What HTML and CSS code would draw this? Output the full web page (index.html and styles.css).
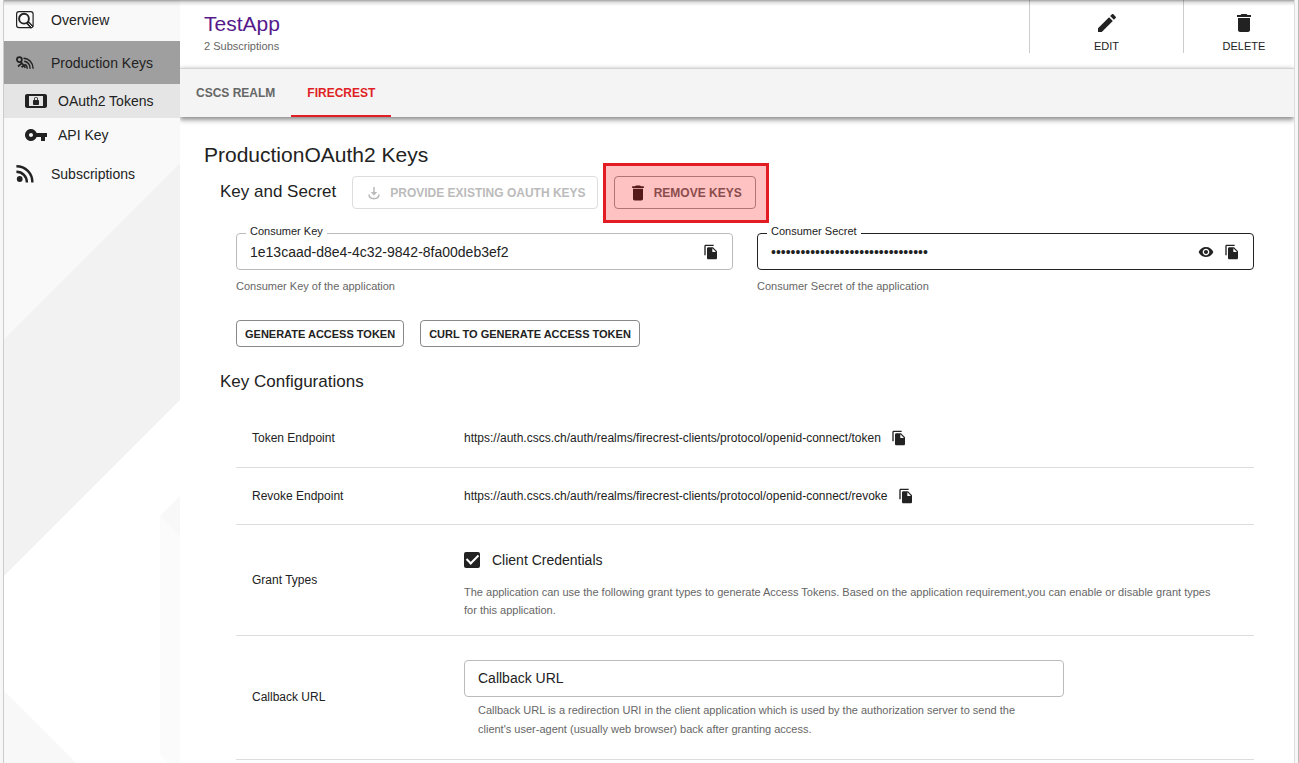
FILE: index.html
```html
<!DOCTYPE html>
<html lang="en">
<head>
<meta charset="utf-8">
<meta name="viewport" content="width=device-width, initial-scale=1">
<title>TestApp - Production OAuth2 Keys</title>
<link rel="stylesheet" href="styles.css">
</head>
<body>
<svg class="defs" aria-hidden="true">
  <symbol id="copy" viewBox="0 0 24 24"><path d="M16 1H4c-1.100 0-2 .9-2 2v14h2V3h12V1zm-1 4l6 6v10c0 1.100-.9 2-2 2H7.990C6.890 23 6 22.100 6 21V7c0-1.100.89-2 1.990-2h7zm-1 7h5.500L14 6.500V12z"/></symbol>
  <symbol id="trash" viewBox="0 0 24 24"><path d="M6 19c0 1.100.9 2 2 2h8c1.100 0 2-.9 2-2V7H6v12zM19 4h-3.500l-1-1h-5l-1 1H5v2h14V4z"/></symbol>
</svg>
<div class="page">
  <nav class="sidebar" aria-label="Application">
    <svg class="backdrop" viewBox="0 0 176 763" preserveAspectRatio="none" aria-hidden="true">
      <path fill="#fff" d="M0 0H176V763H0z"/>
      <path fill="#f9f9f9" d="M0 0H176V163L0 339z"/>
      <path fill="#f2f2f2" d="M176 163V400L0 576V339z"/>
      <path fill="#f8f8f8" d="M176 496V537L156 516z"/>
      <path fill="#fbfbfb" d="M156 516L176 537V763H164L156 755z"/>
      <path fill="#f8f8f8" d="M0 691L72 763H0z"/>
    </svg>
    <a class="item" href="#overview">
      <svg class="icon-sm" viewBox="0 0 18 18" fill="none" stroke="#222"><rect x=".6" y=".6" width="16.500" height="16" rx="2.400" stroke-width="1.200"/><circle cx="8" cy="7.700" r="4.900" stroke-width="1.900"/><path d="M11.300 11.200l5 5.300" stroke-width="3.600"/><path d="M12.500 12.300l3.500 3.800" stroke="#fff" stroke-width="1"/></svg>
      Overview</a>
    <a class="item active" href="#production">
      <svg class="icon-sm" viewBox="0 0 18 18" fill="none" stroke="#222" stroke-width="1.700"><circle cx="3.400" cy="5.600" r="2.500"/><path d="M4.800 7.800l4.600 6M2 12.500l3.600-3.200M5.500 13.300l3.500-2.500"/><path d="M7.500 4.200c5.500.2 9.500 4.500 9.700 10.600M8.200 7.300c3.500.5 5.800 3.400 6 7.500M9 10.300c1.400.7 2.200 2.200 2.300 4.500" stroke-width="1.400"/></svg>
      Production Keys</a>
    <a class="item sub selected" href="#tokens">
      <svg class="icon-md" viewBox="0 0 24 24"><path d="M21 5H3c-1.100 0-2 .9-2 2v10c0 1.100.9 2 2 2h18c1.100 0 2-.9 2-2V7c0-1.100-.9-2-2-2zm-2 12H5V7h14v10zm-9-1h4c.55 0 1-.45 1-1v-3c0-.55-.45-1-1-1v-1c0-1.110-.9-2-2-2-1.110 0-2 .9-2 2v1c-.55 0-1 .45-1 1v3c0 .55.45 1 1 1zm.8-6c0-.66.54-1.200 1.200-1.200.66 0 1.200.54 1.200 1.200v1h-2.400v-1z"/></svg>
      OAuth2 Tokens</a>
    <a class="item sub" href="#apikey">
      <svg class="icon-md" viewBox="0 0 24 24"><path d="M12.650 10C11.830 7.670 9.610 6 7 6c-3.310 0-6 2.690-6 6s2.690 6 6 6c2.610 0 4.830-1.670 5.650-4H17v4h4v-4h2v-4H12.650zM7 14c-1.100 0-2-.9-2-2s.9-2 2-2 2 .9 2 2-.9 2-2 2z"/></svg>
      API Key</a>
    <a class="item" href="#subscriptions">
      <svg class="icon-sm" viewBox="0 0 18 18" fill="none" stroke="#222" stroke-width="2.400"><circle cx="3.700" cy="14" r="2.900" fill="#222" stroke="none"/><path d="M.4 1.300C9.500 1.300 16.400 8.200 16.400 17.500M.4 6.800C6.500 6.800 10.900 11.200 10.900 17.500"/></svg>
      Subscriptions</a>
  </nav>
  <main class="main">
    <header class="top">
      <div class="title">
        <a class="app" href="#app">TestApp</a>
        <span class="small">2 Subscriptions</span>
      </div>
      <button class="action edit" type="button"><svg class="icon-md" viewBox="0 0 24 24"><path d="M3 17.250V21h3.750L17.810 9.940l-3.750-3.750L3 17.250zM20.710 7.040c.39-.39.39-1.020 0-1.410l-2.340-2.340c-.39-.39-1.020-.39-1.410 0l-1.830 1.830 3.750 3.750 1.830-1.830z"/></svg>EDIT</button>
      <button class="action delete" type="button"><svg class="icon-md"><use href="#trash"/></svg>DELETE</button>
    </header>
    <div class="tabs" role="tablist">
      <button class="tab" type="button" role="tab" aria-selected="false">CSCS REALM</button>
      <button class="tab current" type="button" role="tab" aria-selected="true">FIRECREST</button>
    </div>
    <section class="content">
      <h1>ProductionOAuth2 Keys</h1>
      <div class="keys-head">
        <h2>Key and Secret</h2>
        <button class="btn" type="button" disabled><svg class="icon-bin" viewBox="-2 -2 20 20" fill="none" stroke="currentColor" stroke-width="1.600"><path d="M8 2v7"/><path fill="currentColor" stroke="none" d="M4.800 7h6.400L8 10.800z"/><path d="M3 9.500c.3 5.500 9.700 5.500 10 0"/></svg>PROVIDE EXISTING OAUTH KEYS</button>
        <div class="marked"><button class="btn" type="button"><svg class="icon-bin"><use href="#trash"/></svg>REMOVE KEYS</button></div>
      </div>
      <div class="fields">
        <div>
          <div class="field">
            <label for="key">Consumer Key</label>
            <input id="key" type="text" readonly value="1e13caad-d8e4-4c32-9842-8fa00deb3ef2">
            <button class="icon-btn" type="button" aria-label="Copy consumer key"><svg class="icon-xs"><use href="#copy"/></svg></button>
          </div>
          <p class="small">Consumer Key of the application</p>
        </div>
        <div>
          <div class="field hover">
            <label for="secret">Consumer Secret</label>
            <input id="secret" type="password" readonly value="abcdefghijklmnopqrstuvwxyz012345">
            <button class="icon-btn" type="button" aria-label="Show consumer secret"><svg class="icon-xs" viewBox="0 0 24 24"><path d="M12 4.500C7 4.500 2.730 7.610 1 12c1.730 4.390 6 7.500 11 7.500s9.270-3.110 11-7.500c-1.730-4.390-6-7.500-11-7.500zM12 17c-2.760 0-5-2.240-5-5s2.240-5 5-5 5 2.240 5 5-2.240 5-5 5zm0-8c-1.660 0-3 1.340-3 3s1.340 3 3 3 3-1.340 3-3-1.340-3-3-3z"/></svg></button>
            <button class="icon-btn" type="button" aria-label="Copy consumer secret"><svg class="icon-xs"><use href="#copy"/></svg></button>
          </div>
          <p class="small">Consumer Secret of the application</p>
        </div>
      </div>
      <div class="generate">
        <button class="btn compact" type="button">GENERATE ACCESS TOKEN</button>
        <button class="btn compact" type="button">CURL TO GENERATE ACCESS TOKEN</button>
      </div>
      <h2>Key Configurations</h2>
      <table class="config">
        <tbody>
          <tr class="endpoint"><th scope="row">Token Endpoint</th><td><div class="line">https://auth.cscs.ch/auth/realms/firecrest-clients/protocol/openid-connect/token<button class="icon-btn" type="button" aria-label="Copy token endpoint"><svg class="icon-xs"><use href="#copy"/></svg></button></div></td></tr>
          <tr class="endpoint"><th scope="row">Revoke Endpoint</th><td><div class="line">https://auth.cscs.ch/auth/realms/firecrest-clients/protocol/openid-connect/revoke<button class="icon-btn" type="button" aria-label="Copy revoke endpoint"><svg class="icon-xs"><use href="#copy"/></svg></button></div></td></tr>
          <tr><th scope="row">Grant Types</th><td class="grant">
            <label class="check"><input type="checkbox" checked>Client Credentials</label>
            <p class="small">The application can use the following grant types to generate Access Tokens. Based on the application requirement,you can enable or disable grant types for this application.</p>
          </td></tr>
          <tr><th scope="row"><label for="callback">Callback URL</label></th><td class="callback">
            <input id="callback" type="text" placeholder="Callback URL">
            <p class="small">Callback URL is a redirection URI in the client application which is used by the authorization server to send the client's user-agent (usually web browser) back after granting access.</p>
          </td></tr>
        </tbody>
      </table>
    </section>
  </main>
</div>
</body>
</html>
```

FILE: styles.css
```css
* { box-sizing: border-box; }
body {
  margin: 0;
  background: #f7f7f7;
  color: #222;
  font: 14px/20px "Liberation Sans", Arial, sans-serif;
}
h1, h2, p { margin: 0; font-weight: 400; }
button, input { font: inherit; color: inherit; }
button { border: 0; background: none; padding: 0; cursor: pointer; }
a { color: inherit; text-decoration: none; }
svg { flex: none; display: block; fill: #222; }
svg[fill="none"] { fill: none; }
.defs { position: absolute; width: 0; height: 0; }
.icon-xs { width: 16px; height: 16px; }
.icon-sm { width: 18px; height: 18px; }
.icon-bin { width: 20px; height: 20px; }
.icon-md { width: 24px; height: 24px; }
.small { font-size: 11px; line-height: 18px; color: #666; }

.page {
  position: relative;
  display: flex;
  min-height: 100vh;
  margin-left: 3px;
  border-left: 1px solid #ccc;
  border-right: 1px solid #bbb;
  padding-right: 3px;
}
/* shadow cast by the app bar above */
.page::before {
  content: ""; position: absolute; z-index: 1; inset: 0 4px auto 0; height: 6px;
  background: linear-gradient(rgba(0,0,0,.36), rgba(0,0,0,.12) 40%, transparent);
  pointer-events: none;
}
.sidebar { position: relative; z-index: 0; width: 176px; flex: none; }
.backdrop { position: absolute; inset: 0; width: 100%; height: 100%; z-index: -1; }
.item { display: flex; align-items: center; gap: 17px; height: 43px; padding-left: 12px; }
.item:first-of-type { height: 41px; padding-bottom: 2px; }
.item.active { background: #9f9f9f; }
.item.sub { height: 34px; gap: 10px; padding-left: 20px; }
.item.selected { background: #e5e5e5; }

.main { flex: 1; min-width: 0; overflow: hidden; background: #fff; border-right: 1px solid #ddd; }
.top { display: flex; align-items: flex-start; height: 68px; }
.title { flex: 1; padding: 12px 24px 0; display: flex; flex-direction: column; }
.app { font-size: 21px; line-height: 24px; color: #551a8b; }
.title .small { line-height: 20px; }
.action {
  display: flex; flex-direction: column; align-items: center;
  height: 53px; padding-top: 11px;
  border-left: 1px solid #ccc;
  font-size: 11px; line-height: 22px;
}
.edit { width: 154px; }
.delete { width: 111px; padding-left: 10px; }

.tabs { display: flex; height: 49px; background: #f4f4f4; box-shadow: 0 3px 5px rgba(0,0,0,.4), 0 0 5px rgba(0,0,0,.15); border-top: 1px solid #d4d4d4; }
.tab { padding: 2px 16px 0; font-size: 12px; font-weight: 700; color: #666; border-bottom: 2px solid transparent; }
.tab.current { color: #e01f26; border-color: #e01f26; }

.content { padding: 26px 40px 0 24px; }
h1 { font-size: 21px; line-height: 24px; }
h2 { font-size: 17px; line-height: 24px; padding-left: 16px; }
.keys-head { display: flex; align-items: center; gap: 16px; margin-top: 9px; }
.keys-head h2 { padding-bottom: 2px; }
.btn {
  display: flex; align-items: center; gap: 6px;
  height: 33px; padding: 0 11px;
  border: 1px solid #999; border-radius: 4px;
  font-size: 12px; font-weight: 700; color: #666;
  white-space: nowrap;
}
.btn:disabled { border-color: #ddd; color: #bbb; }
.btn.compact { height: 27px; padding: 0 8px; font-size: 11px; color: #222; border-color: #888; }
.marked { position: relative; }
.marked .btn { padding: 0 13px; }
.marked::after {
  content: ""; position: absolute; inset: -13px -13px -14px -11px;
  border: 3px solid #e31b23; background: rgba(255,0,0,.24);
  pointer-events: none;
}
.fields { display: grid; grid-template-columns: 1fr 1fr; gap: 24px; margin: 24px 0 0 32px; }
.field {
  position: relative; display: flex; align-items: center; gap: 10px;
  height: 37px; padding: 0 13px;
  border: 1px solid #bbb; border-radius: 4px;
}
.field.hover { border-color: #222; }
.field label {
  position: absolute; left: 9px; top: -10px; padding: 0 4px;
  font-size: 11px; line-height: 14px; background: #fff;
}
.field input { flex: 1; min-width: 0; border: 0; padding: 0; background: none; outline: 0; }
.fields .small { margin-top: 7px; }
.generate { display: flex; gap: 16px; margin: 25px 0 23px 32px; }

.config { width: calc(100% - 32px); margin: 16px 0 0 32px; border-collapse: collapse; table-layout: fixed; font-size: 12px; }
.config th { width: 212px; padding: 0 16px; font-weight: 400; text-align: left; }
.config td { padding: 0 16px; }
.config tr { border-bottom: 1px solid #ddd; }
.endpoint { height: 57px; }
.line { display: flex; align-items: center; gap: 10px; }
.config .grant { padding: 25px 32px 16px 16px; }
.check { display: flex; align-items: center; gap: 12px; font-size: 14px; margin-bottom: 13px; }
.check input {
  appearance: none; width: 16px; height: 16px; margin: 0;
  display: grid; place-items: center;
  border-radius: 2px; background: #222;
}
.check input::after {
  content: ""; width: 5px; height: 10px; margin-bottom: 3px;
  border: solid #fff; border-width: 0 2px 2px 0; transform: rotate(45deg);
}
.config .callback { padding-top: 24px; padding-bottom: 20px; }
.callback input {
  display: block; width: 100%; max-width: 600px; height: 37px; padding: 0 13px;
  border: 1px solid #bbb; border-radius: 4px; background: #fff; font-size: 14px;
}
.callback input::placeholder { color: #222; opacity: 1; }
.callback .small { max-width: 580px; margin-top: 4px; padding-left: 14px; line-height: 19px; }
```
